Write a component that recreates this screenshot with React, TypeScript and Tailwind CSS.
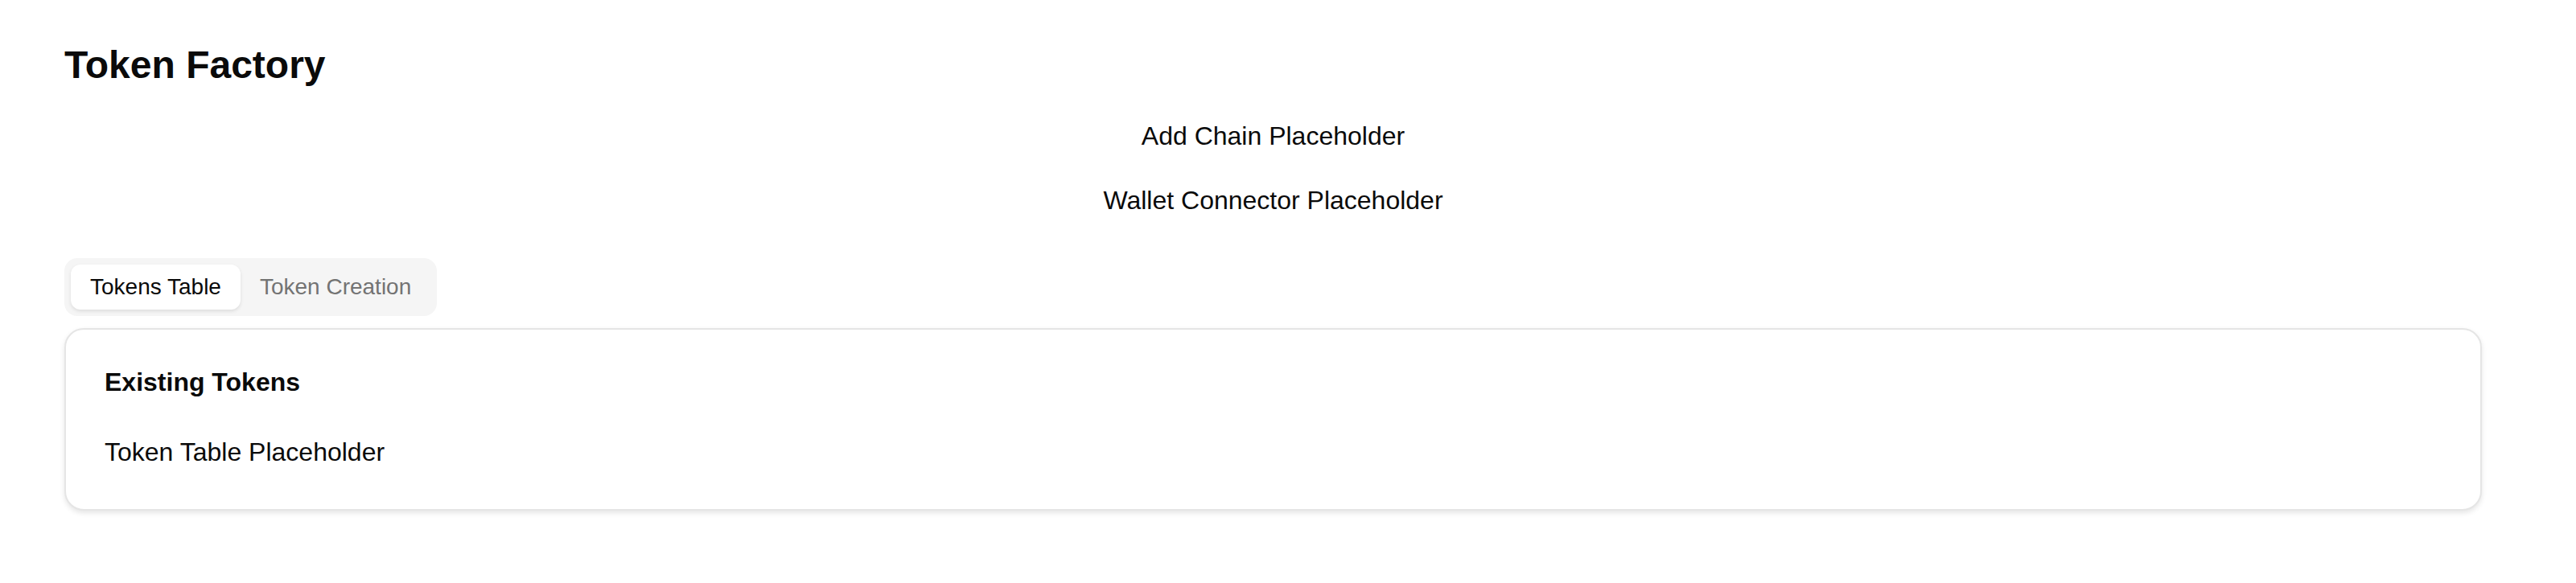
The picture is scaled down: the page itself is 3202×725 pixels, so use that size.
import { useState } from 'react';

export default function App() {
  const [tab, setTab] = useState<'table' | 'create'>('table');

  return (
    <div className="min-h-screen bg-white pl-[80px] pr-[117px] pt-[49px] font-['Liberation_Sans',Arial,sans-serif] text-[#0a0a0a]">
      {/* Header */}
      <h1 className="text-[48px] leading-[64px] font-bold">Token Factory</h1>

      <div className="mt-[32px] text-center text-[32px] leading-[48px]">Add Chain Placeholder</div>
      <div className="mt-[32px] text-center text-[32px] leading-[48px]">Wallet Connector Placeholder</div>

      {/* Tabs */}
      <div className="mt-[48px] inline-flex h-[72px] items-center rounded-[16px] bg-[#f5f5f5] p-[8px]">
        <button
          onClick={() => setTab('table')}
          className={
            tab === 'table'
              ? 'h-[56px] rounded-[12px] bg-white px-[24px] text-[28px] leading-[40px] text-[#0a0a0a] shadow-[0_2px_4px_rgba(0,0,0,0.1)]'
              : 'h-[56px] rounded-[12px] px-[24px] text-[28px] leading-[40px] text-[#737373]'
          }
        >
          Tokens Table
        </button>
        <button
          onClick={() => setTab('create')}
          className={
            tab === 'create'
              ? 'h-[56px] rounded-[12px] bg-white px-[24px] text-[28px] leading-[40px] text-[#0a0a0a] shadow-[0_2px_4px_rgba(0,0,0,0.1)]'
              : 'h-[56px] rounded-[12px] px-[24px] text-[28px] leading-[40px] text-[#737373]'
          }
        >
          Token Creation
        </button>
      </div>

      {/* Card */}
      <div className="mt-[15px] h-[227px] rounded-[24px] border-2 border-[#e5e5e5] bg-white px-[48px] pt-[49px] shadow-[0_3px_6px_rgba(0,0,0,0.1)]">
        <h2 className="text-[32px] leading-none font-bold">
          {tab === 'table' ? 'Existing Tokens' : 'Create Token'}
        </h2>
        <p className="mt-[47px] text-[32px] leading-[48px]">
          {tab === 'table' ? 'Token Table Placeholder' : 'Token Form Placeholder'}
        </p>
      </div>
    </div>
  );
}
